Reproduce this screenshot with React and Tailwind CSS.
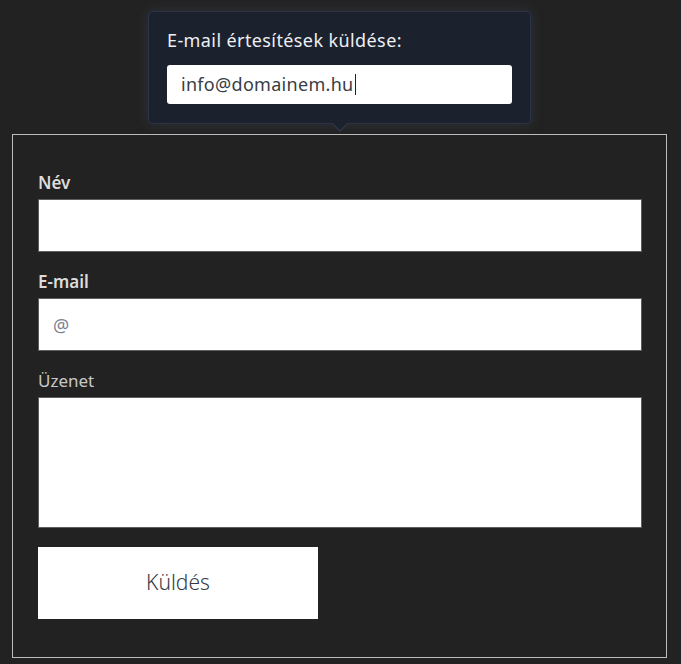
const App = () => {
    return (
        <div className="relative min-h-[664px] bg-[#222222] pt-[134px] px-[12px] pb-[7px] font-['Noto_Sans',sans-serif]">
            {/* E-mail értesítés popover */}
            <div className="absolute left-[148px] top-[11px] w-[383px] h-[113px] rounded-[4px] bg-[#1c212e] border border-[#2c3344] shadow-[0_0_14px_rgba(110,130,170,0.18)] px-[18px] pt-[16px] z-10">
                <div className="text-[18px] leading-[24px] tracking-[0.4px] text-[#eef0f4]">E-mail értesítések küldése:</div>
                <div className="mt-[13px] h-[39px] w-[345px] rounded-[3px] bg-white flex items-center pl-[14px]">
                    <span className="text-[18px] tracking-[0.3px] text-[#3a3d44]">info@domainem.hu</span>
                    <span className="ml-[1px] h-[21px] w-px bg-[#222]"></span>
                </div>
                <div className="absolute left-[182px] -bottom-[9px] h-0 w-0 border-l-[9px] border-r-[9px] border-t-[9px] border-l-transparent border-r-transparent border-t-[#2c3344]"></div>
                <div className="absolute left-[183px] -bottom-[7px] h-0 w-0 border-l-[8px] border-r-[8px] border-t-[8px] border-l-transparent border-r-transparent border-t-[#1c212e]"></div>
            </div>

            {/* Kapcsolati űrlap */}
            <form className="w-[655px] h-[524px] border border-[#bdbdbd] px-[25px] pt-[38px]">
                <label className="block text-[17px] leading-[20px] font-semibold text-[#dcdcdc]">Név</label>
                <input type="text" className="mt-[6px] block w-[604px] h-[53px] bg-white border border-[#5e5e5e] outline-none" />

                <label className="mt-[20px] block text-[17px] leading-[20px] font-semibold text-[#dcdcdc]">E-mail</label>
                <input type="email" placeholder="@" className="mt-[6px] block w-[604px] h-[53px] bg-white border border-[#5e5e5e] outline-none px-[14px] text-[18px] placeholder:text-[#7b8190]" />

                <label className="mt-[20px] block text-[17px] leading-[20px] text-[#c8c8c8]">Üzenet</label>
                <textarea className="mt-[6px] block w-[604px] h-[131px] bg-white border border-[#5e5e5e] outline-none resize-none"></textarea>

                <button type="button" className="mt-[19px] block w-[280px] h-[72px] bg-white text-[21px] font-light text-[#333a44]">
                    Küldés
                </button>
            </form>
        </div>
    );
};

export default App;
